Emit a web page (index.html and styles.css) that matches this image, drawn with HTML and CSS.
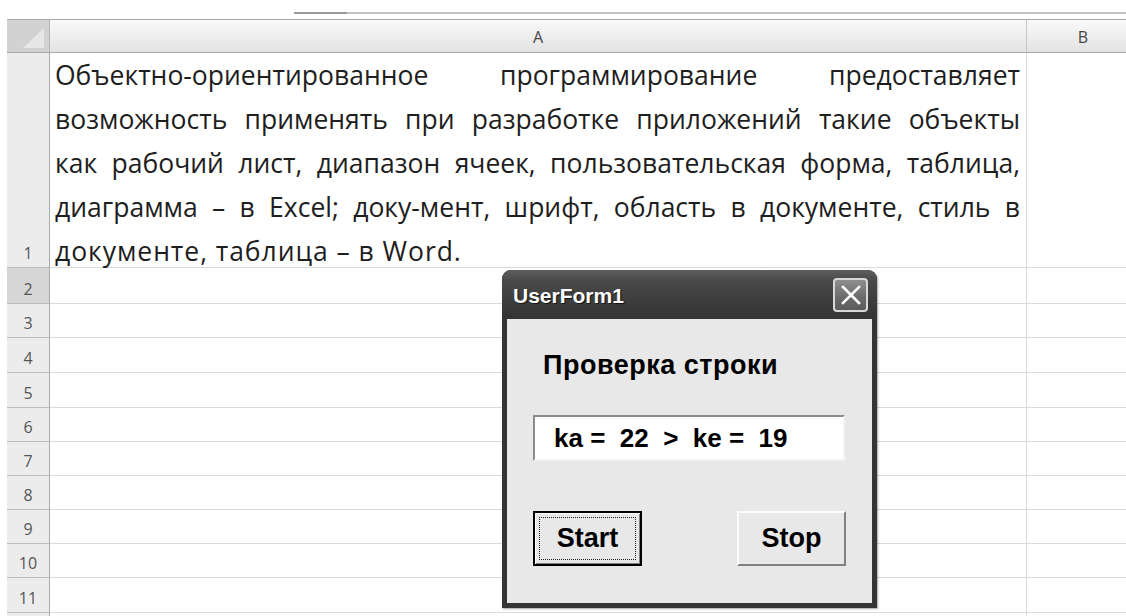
FILE: index.html
```html
<!DOCTYPE html>
<html lang="ru">
<head>
<meta charset="utf-8">
<title>Книга1</title>
<link rel="stylesheet" href="styles.css">
</head>
<body>
<div class="ribbon-edge">
  <div class="scroll-thumb"></div>
</div>
<div class="sheet">
  <div class="corner"><span class="corner-tri"></span></div>
  <div class="col-head">A</div>
  <div class="col-head">B</div>

  <div class="row-head">1</div>
  <div class="cell cell-text">
    <div class="line">Объектно-ориентированное программирование предоставляет</div>
    <div class="line">возможность применять при разработке приложений такие объекты</div>
    <div class="line">как рабочий лист, диапазон ячеек, пользовательская форма, таблица,</div>
    <div class="line">диаграмма – в Excel; доку-мент, шрифт, область в документе, стиль в</div>
    <div class="line last">документе, таблица – в Word.</div>
  </div>
  <div class="cell"></div>

  <div class="row-head selected">2</div><div class="cell"></div><div class="cell"></div>
  <div class="row-head">3</div><div class="cell"></div><div class="cell"></div>
  <div class="row-head">4</div><div class="cell"></div><div class="cell"></div>
  <div class="row-head">5</div><div class="cell"></div><div class="cell"></div>
  <div class="row-head">6</div><div class="cell"></div><div class="cell"></div>
  <div class="row-head">7</div><div class="cell"></div><div class="cell"></div>
  <div class="row-head">8</div><div class="cell"></div><div class="cell"></div>
  <div class="row-head">9</div><div class="cell"></div><div class="cell"></div>
  <div class="row-head">10</div><div class="cell"></div><div class="cell"></div>
  <div class="row-head">11</div><div class="cell"></div><div class="cell"></div>
  <div class="row-head"></div><div class="cell"></div><div class="cell"></div>
</div>

<div class="userform">
  <div class="titlebar">
    <span class="title">UserForm1</span>
    <span class="close-btn">
      <svg width="22" height="22" viewBox="0 0 22 22">
        <path d="M3 3 L19 19 M19 3 L3 19" stroke="#fff" stroke-width="2.6" stroke-linecap="square" fill="none"/>
      </svg>
    </span>
  </div>
  <div class="client">
    <div class="label">Проверка строки</div>
    <div class="textbox">ka =  22  &gt;  ke =  19</div>
    <div class="buttons">
      <div class="btn default"><span class="focus">Start</span></div>
      <div class="btn">Stop</div>
    </div>
  </div>
</div>
</body>
</html>
```
FILE: styles.css
```css
html, body {
  margin: 0;
  padding: 0;
  background: #fff;
  width: 1126px;
  height: 616px;
  overflow: hidden;
}

body {
  position: relative;
  font-family: "Open Sans", "Noto Sans", sans-serif;
}

/* strip above the column headers */
.ribbon-edge {
  height: 19px;
  box-sizing: border-box;
  padding-top: 12px;
  padding-left: 294px;
}
.ribbon-edge .scroll-thumb {
  height: 2px;
  background: linear-gradient(to right, #9a9a9a 0, #9a9a9a 53px, #c4c4c4 53px);
}

/* worksheet grid */
.sheet {
  display: grid;
  margin-left: 7px;
  width: 1140px;
  grid-template-columns: 43px 977px 113px;
  grid-template-rows: 34px 215px 36px 34px 35px 35px 34px 34px 34px 34px 34px 35px 20px;
}

.corner {
  background: #d2d2d2;
  border-top: 1px solid #a8a8a8;
  border-bottom: 1px solid #a8a8a8;
  border-right: 1px solid #b4b4b4;
  box-sizing: border-box;
  position: relative;
}
.corner-tri {
  position: absolute;
  right: 5px;
  bottom: 4px;
  width: 0;
  height: 0;
  border-left: 21px solid transparent;
  border-bottom: 20px solid #e6e6e6;
}

.col-head {
  box-sizing: border-box;
  border-top: 1px solid #a8a8a8;
  border-bottom: 1px solid #a8a8a8;
  border-right: 1px solid #c6c6c6;
  background: linear-gradient(#f9f9f9, #e3e3e3);
  color: #454545;
  font-size: 16px;
  display: flex;
  align-items: center;
  justify-content: center;
  padding-top: 2px;
}

.row-head {
  box-sizing: border-box;
  background: #ececec;
  border-right: 1px solid #a9a9a9;
  border-bottom: 1px solid #bcbcbc;
  color: #555;
  font-size: 16px;
  display: flex;
  align-items: flex-end;
  justify-content: center;
  padding-bottom: 3px;
}
.row-head.selected {
  background: #d6d6d6;
}

.cell {
  box-sizing: border-box;
  border-right: 1px solid #dadada;
  border-bottom: 1px solid #dadada;
}

.cell-text {
  padding: 0 6px 0 5px;
  color: #1e1e1e;
  font-size: 26.5px;
  line-height: 44px;
  position: relative;
  z-index: 0;
}
.cell-text .line {
  white-space: nowrap;
  text-align: justify;
  text-align-last: justify;
}
.cell-text .line.last {
  text-align-last: left;
  letter-spacing: 0.95px;
}

/* VBA user form window */
.userform {
  position: absolute;
  z-index: 1;
  left: 502px;
  top: 270px;
  width: 375px;
  height: 338px;
  display: flex;
  flex-direction: column;
  background: #353535;
  border-radius: 9px 9px 0 0;
  box-shadow: 1px 1px 2px rgba(0, 0, 0, 0.35);
}

.titlebar {
  height: 49px;
  display: flex;
  align-items: center;
  justify-content: space-between;
  padding: 0 9px 0 11px;
  border-radius: 9px 9px 0 0;
  background: linear-gradient(#5e5e5e 0, #4a4a4a 20%, #3e3e3e 60%, #333 100%);
  flex-shrink: 0;
}
.title {
  font-family: "Liberation Sans", Arial, sans-serif;
  font-weight: bold;
  font-size: 21px;
  color: #fff;
  text-shadow: 1px 1px 1px #111;
  margin-top: 2px;
}
.close-btn {
  width: 35px;
  height: 34px;
  box-sizing: border-box;
  border: 2px solid #d8d8d8;
  border-radius: 4px;
  background: linear-gradient(#8e8e8e, #6a6a6a 60%, #5c5c5c);
  display: flex;
  align-items: center;
  justify-content: center;
}

.client {
  flex: 1;
  margin: 0 5px 5px 5px;
  background: #e8e8e8;
  font-family: "Liberation Sans", Arial, sans-serif;
  font-weight: bold;
  color: #000;
  padding-left: 26px;
}

.label {
  font-size: 27px;
  letter-spacing: 0.5px;
  margin: 31px 0 0 10px;
  line-height: 30px;
}

.textbox {
  margin-top: 35px;
  width: 312px;
  height: 46px;
  box-sizing: border-box;
  background: #fff;
  border-style: solid;
  border-width: 2px;
  border-color: #8c8c8c #f4f4f4 #f4f4f4 #8c8c8c;
  font-size: 26px;
  white-space: pre;
  padding-left: 19px;
  line-height: 42px;
}

.buttons {
  margin-top: 50px;
  width: 313px;
  display: flex;
  justify-content: space-between;
}

.btn {
  width: 109px;
  height: 55px;
  box-sizing: border-box;
  background: #e8e8e8;
  border-style: solid;
  border-width: 2px;
  border-color: #fcfcfc #808080 #808080 #fcfcfc;
  font-size: 27px;
  display: flex;
  align-items: center;
  justify-content: center;
}
.btn.default {
  border: 2px solid #000;
  box-shadow: inset 1px 1px 0 #fff, inset -1px -1px 0 #808080;
  padding: 4px;
}
.btn .focus {
  flex: 1;
  align-self: stretch;
  display: flex;
  align-items: center;
  justify-content: center;
  border: 1px dotted #222;
}
```
